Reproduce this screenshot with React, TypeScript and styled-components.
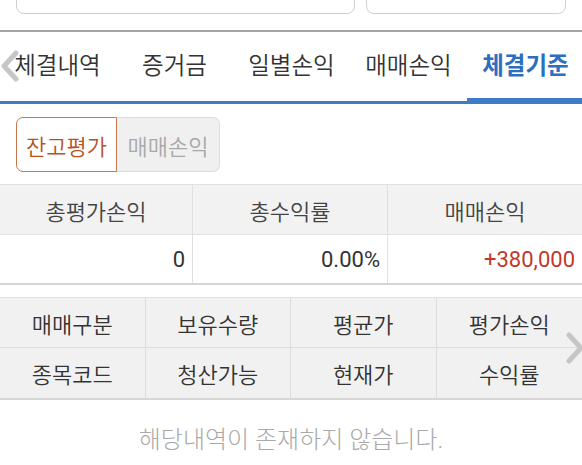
import styled, { createGlobalStyle } from "styled-components";

const GlobalStyle = createGlobalStyle`
    body {
        margin : 0;
        background : #ffffff;
        font-family : Roboto, "Noto Sans CJK KR", sans-serif;
        color : #333333;
    }
`;

const tabs = ["체결내역", "증거금", "일별손익", "매매손익", "체결기준"];
const summary = [
    { title: "총평가손익", value: "0", tone: "plain" },
    { title: "총수익률", value: "0.00%", tone: "plain" },
    { title: "매매손익", value: "+380,000", tone: "up" },
];
const columns = ["매매구분", "보유수량", "평균가", "평가손익", "종목코드", "청산가능", "현재가", "수익률"];

const Chevron = ({ dir }: { dir: "left" | "right" }) => (
    <svg width="19" height="32" viewBox="0 0 19 32">
        <path
            d={dir === "left" ? "M16 3 L4 16 L16 29" : "M3 3 L15 16 L3 29"}
            fill="none"
            stroke="#c6c6c6"
            strokeWidth="5"
            strokeLinecap="round"
            strokeLinejoin="round"
        />
    </svg>
);

const App = () => {
    return (
        <StPage>
            <GlobalStyle />
            <StInputBar>
                <StInput $grow />
                <StInput />
            </StInputBar>
            <StDivider />
            <StTabStrip>
                <StTabArrow><Chevron dir="left" /></StTabArrow>
                {tabs.map((t, i) => (
                    <StTab key={t} $active={i === tabs.length - 1}>{t}</StTab>
                ))}
            </StTabStrip>
            <StSegmentRow>
                <StSegment $active>잔고평가</StSegment>
                <StSegment>매매손익</StSegment>
            </StSegmentRow>
            <StSummary>
                {summary.map((s) => (
                    <StHeadCell key={s.title}>{s.title}</StHeadCell>
                ))}
                {summary.map((s) => (
                    <StValueCell key={s.title} $up={s.tone === "up"}>{s.value}</StValueCell>
                ))}
            </StSummary>
            <StGridWrap>
                <StGrid>
                    {columns.map((c) => (
                        <StGridCell key={c}>{c}</StGridCell>
                    ))}
                </StGrid>
                <StGridArrow><Chevron dir="right" /></StGridArrow>
            </StGridWrap>
            <StEmpty>해당내역이 존재하지 않습니다.</StEmpty>
        </StPage>
    );
};

export default App;

const StPage = styled.div`
    width : 582px;
    height : 465px;
    overflow : hidden;
    display : flex;
    flex-direction : column;
`

const StInputBar = styled.div`
    height : 14px;
    display : flex;
    align-items : flex-end;
    gap : 11px;
    padding : 0 16px;
    overflow : hidden;
`

const StInput = styled.div<{ $grow?: boolean }>`
    flex : ${(p) => (p.$grow ? "0 0 339px" : "0 0 200px")};
    height : 40px;
    box-sizing : border-box;
    border : 1px solid #cfcfcf;
    border-radius : 8px;
    background : #ffffff;
`

const StDivider = styled.div`
    margin-top : 16px;
    height : 2px;
    background : #a3a3a3;
`

const StTabStrip = styled.div`
    position : relative;
    height : 72px;
    display : flex;
    margin-left : -1px;
    border-bottom : 3px solid #3d7cc9;
    box-sizing : border-box;
    overflow : hidden;
`

const StTabArrow = styled.div`
    position : absolute;
    left : 1px;
    top : 18px;
    display : flex;
`

const StTab = styled.div<{ $active?: boolean }>`
    flex : 0 0 117px;
    display : flex;
    align-items : center;
    justify-content : center;
    padding-bottom : 5px;
    font-size : 23.5px;
    font-weight : ${(p) => (p.$active ? 700 : 350)};
    color : ${(p) => (p.$active ? "#2d6fbe" : "#333333")};
    box-shadow : ${(p) => (p.$active ? "inset 0 -3px 0 #3d7cc9" : "none")};
`

const StSegmentRow = styled.div`
    display : flex;
    padding : 13px 16px 12px;
`

const StSegment = styled.div<{ $active?: boolean }>`
    width : ${(p) => (p.$active ? "101px" : "103px")};
    height : 55px;
    box-sizing : border-box;
    display : flex;
    align-items : center;
    justify-content : center;
    font-size : 22px;
    font-weight : 350;
    color : ${(p) => (p.$active ? "#b8521f" : "#a8a8a8")};
    background : ${(p) => (p.$active ? "#ffffff" : "#f0f0f0")};
    border : 1px solid ${(p) => (p.$active ? "#c8764c" : "#dddddd")};
    border-radius : ${(p) => (p.$active ? "7px 0 0 7px" : "0 7px 7px 0")};
    border-left-width : ${(p) => (p.$active ? "1px" : "0")};
`

const StSummary = styled.div`
    display : grid;
    grid-template-columns : 193px 195px 194px;
    grid-template-rows : 50px 48px;
    border-top : 1px solid #e2e2e2;
    border-bottom : 2px solid #d6d6d6;
`

const StHeadCell = styled.div`
    display : flex;
    align-items : center;
    justify-content : center;
    background : #f2f2f2;
    font-size : 22px;
    font-weight : 350;
    color : #444444;
    border-bottom : 1px solid #e2e2e2;
    &:not(:nth-child(3)) {
        border-right : 1px solid #e0e0e0;
    }
`

const StValueCell = styled.div<{ $up?: boolean }>`
    display : flex;
    align-items : center;
    justify-content : flex-end;
    padding-right : 7px;
    font-size : 22px;
    font-weight : 400;
    color : ${(p) => (p.$up ? "#c0392b" : "#333333")};
    &:not(:last-child) {
        border-right : 1px solid #e0e0e0;
    }
`

const StGridWrap = styled.div`
    position : relative;
    margin-top : 12px;
`

const StGrid = styled.div`
    display : grid;
    grid-template-columns : repeat(4, 1fr);
    grid-template-rows : 50px 50px;
    background : #f1f1f1;
    border-top : 1px solid #e2e2e2;
    border-bottom : 2px solid #d6d6d6;
`

const StGridCell = styled.div`
    display : flex;
    align-items : center;
    justify-content : center;
    font-size : 22px;
    font-weight : 350;
    color : #333333;
    &:nth-child(-n + 4) {
        border-bottom : 1px solid #dddddd;
    }
    &:not(:nth-child(4n)) {
        border-right : 1px solid #dddddd;
    }
`

const StGridArrow = styled.div`
    position : absolute;
    right : -3px;
    top : 35px;
    display : flex;
`

const StEmpty = styled.div`
    margin-top : 20px;
    text-align : center;
    font-size : 24px;
    font-weight : 300;
    color : #a9a9a9;
`
